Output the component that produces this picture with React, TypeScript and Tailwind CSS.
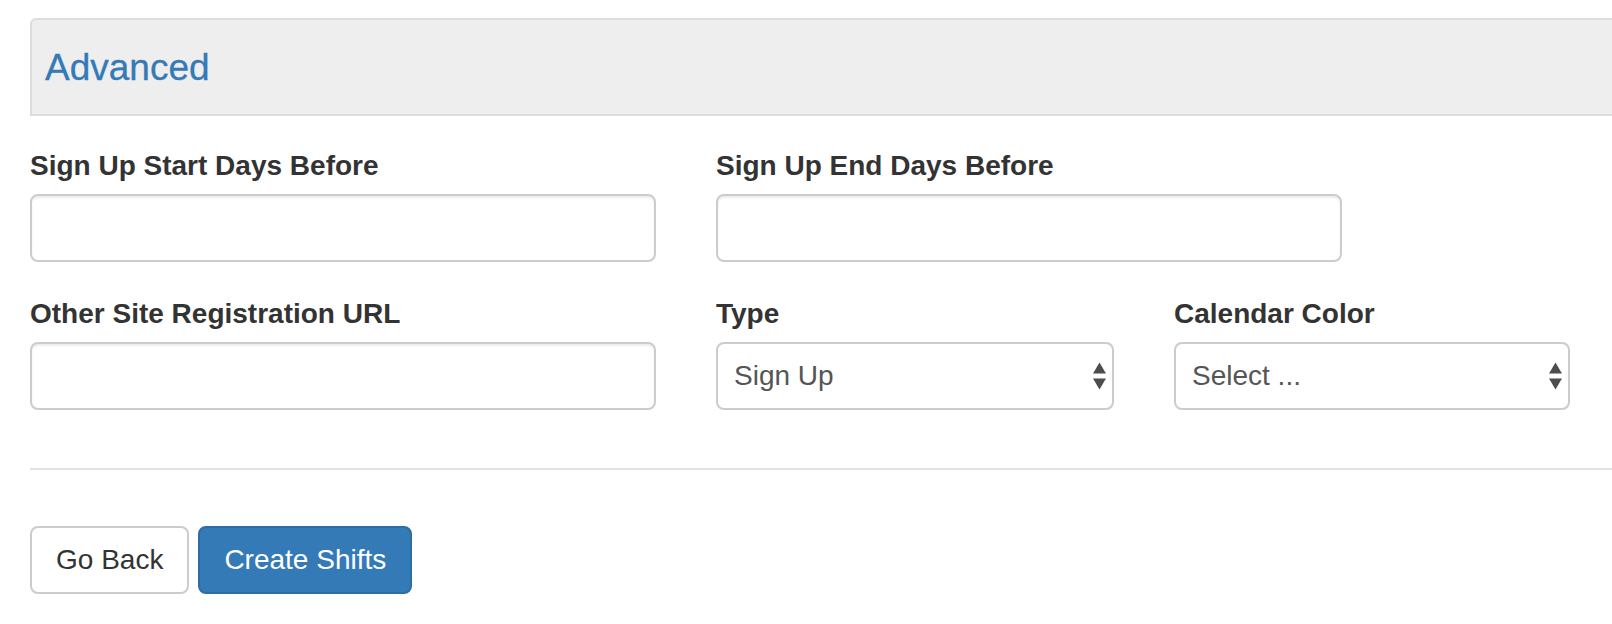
import { ReactNode } from 'react'

function Field({ label, children }: { label: string; children: ReactNode }) {
  return (
    <div className="flex flex-col">
      <label className="mt-[2px] mb-[8px] text-[28px] leading-[40px] font-bold text-[#333]">{label}</label>
      {children}
    </div>
  )
}

function TextInput() {
  return (
    <input
      type="text"
      className="h-[68px] w-full rounded-[8px] border-2 border-[#ccc] bg-white px-[24px] text-[28px] text-[#555] shadow-[inset_0_2px_2px_rgba(0,0,0,0.075)] outline-none"
    />
  )
}

function SelectInput({ options }: { options: string[] }) {
  return (
    <div className="relative">
      <select
        defaultValue={options[0]}
        className="h-[68px] w-full appearance-none rounded-[8px] border-2 border-[#ccc] bg-white pl-[16px] pr-[40px] text-[28px] text-[#555] outline-none"
      >
        {options.map((o) => (
          <option key={o}>{o}</option>
        ))}
      </select>
      {/* up/down arrows */}
      <svg
        className="pointer-events-none absolute right-[8px] top-1/2 -translate-y-1/2"
        width="13"
        height="27"
        viewBox="0 0 13 27"
      >
        <path d="M6.5 0 L13 11 H0 Z" fill="#4d4d4d" />
        <path d="M0 16 H13 L6.5 27 Z" fill="#4d4d4d" />
      </svg>
    </div>
  )
}

export default function App() {
  return (
    <div className="h-[624px] w-[1612px] overflow-hidden bg-white font-['Liberation_Sans',Arial,sans-serif]">
      <div className="pl-[30px] pt-[18px]">
        {/* Panel heading */}
        <div className="flex h-[98px] w-[1600px] items-center rounded-tl-[6px] border-2 border-[#ddd] bg-[#eee] pl-[13px]">
          <h3 className="text-[37px] leading-none font-normal text-[#337ab7] [-webkit-text-stroke:0.3px_#337ab7]">Advanced</h3>
        </div>

        <div className="mt-[28px] grid grid-cols-[626px_626px] gap-x-[60px]">
          <Field label="Sign Up Start Days Before">
            <TextInput />
          </Field>
          <Field label="Sign Up End Days Before">
            <TextInput />
          </Field>
        </div>

        <div className="mt-[30px] grid grid-cols-[626px_398px_396px] gap-x-[60px]">
          <Field label="Other Site Registration URL">
            <TextInput />
          </Field>
          <Field label="Type">
            <SelectInput options={['Sign Up', 'Other Site']} />
          </Field>
          <Field label="Calendar Color">
            <SelectInput options={['Select ...', 'Red', 'Blue', 'Green']} />
          </Field>
        </div>

        <div className="mt-[58px] h-[2px] w-[1600px] bg-[#e3e3e3]" />

        {/* Actions */}
        <div className="mt-[56px] flex gap-[9px]">
          <button className="h-[68px] rounded-[8px] border-2 border-[#ccc] bg-white px-[24px] text-[28px] text-[#333]">
            Go Back
          </button>
          <button className="h-[68px] rounded-[8px] border-2 border-[#2e6da4] bg-[#337ab7] px-[24px] text-[28px] text-white">
            Create Shifts
          </button>
        </div>
      </div>
    </div>
  )
}
